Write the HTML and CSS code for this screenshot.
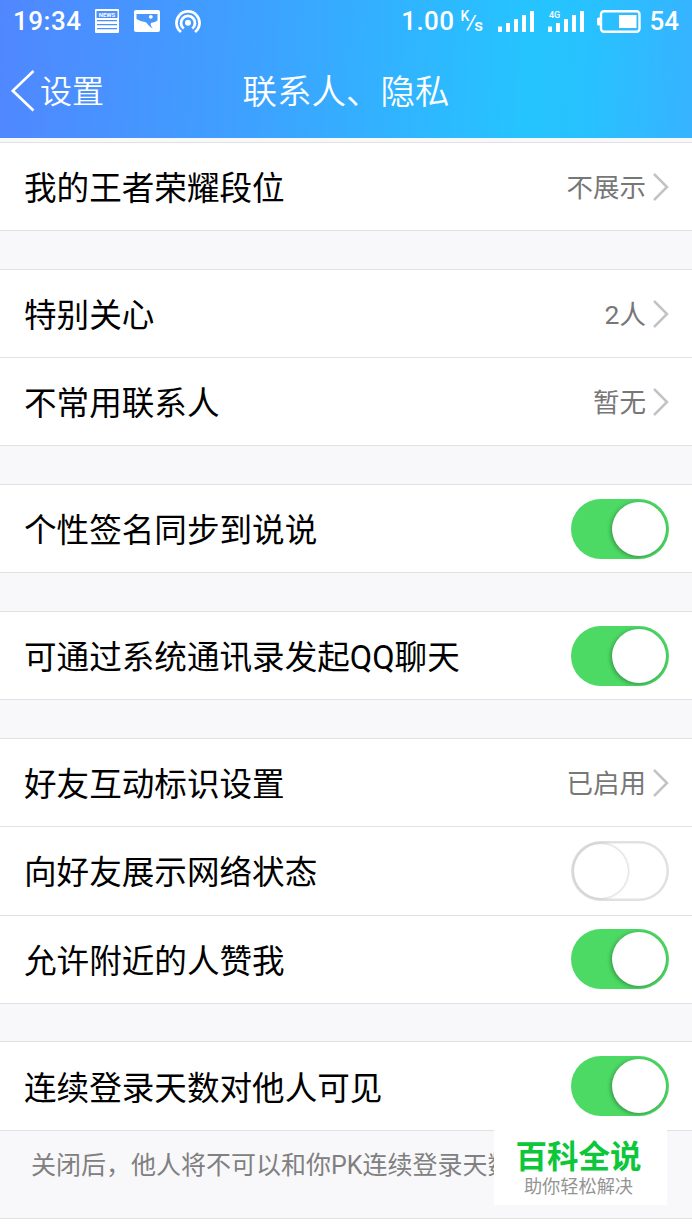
FILE: index.html
```html
<!DOCTYPE html>
<html lang="zh-CN">
<head>
    <meta charset="UTF-8">
    <meta name="viewport" content="width=device-width, initial-scale=1.0">
    <title>联系人、隐私</title>
    <link rel="stylesheet" href="styles.css">
</head>
<body>
    <header class="header">
        <div class="status-bar">
            <span class="time">19:34</span>
            <svg class="icon-news" width="24" height="24" viewBox="0 0 24 24">
                <rect width="24" height="24" rx="1" fill="#fff"/>
                <path d="M1.500 2h21v7h-21zM2 11h20v1.300H2zM2 15h20v1.300H2zM2 19h20v1.300H2z" fill="#4b90fd"/>
                <text x="12" y="7.800" text-anchor="middle" class="news-text">NEWS</text>
            </svg>
            <svg class="icon-picture" width="26" height="22" viewBox="0 0 26 22">
                <rect width="26" height="22" rx="2" fill="#fff"/>
                <path d="M2.500 4h21v6.500c-2.500 1.500-4.500 2-6.500 2.500-.8 1.200-.2 3 1.800 5.500-3-1.500-5-4-6.500-6-3-1-6.500-1.500-9.800-3.500z" fill="#4797fe"/>
                <circle cx="16.800" cy="6.800" r="1.900" fill="#fff"/>
            </svg>
            <svg class="icon-cast" width="26" height="26" viewBox="0 0 26 26" fill="none" stroke="#fff" stroke-width="2.800">
                <path d="M6 23a11.500 11.500 0 1 1 14 0"/>
                <path d="M8.800 19.500a7 7 0 1 1 8.400 0"/>
                <circle cx="13" cy="13.800" r="3" fill="#fff" stroke="none"/>
            </svg>
            <div class="status-right">
                <span class="speed">1.00</span>
                <span class="unit"><sup>K</sup><i>/</i><sub>s</sub></span>
                <svg class="signal" width="36" height="24" viewBox="0 0 36 24" fill="#fff">
                    <path d="M0 17.500h4V23H0zM8 14h4v9H8zM16 10h4v13h-4zM24 6h4v17h-4zM32 2h4v21h-4z"/>
                </svg>
                <svg class="signal signal-4g" width="36" height="24" viewBox="0 0 36 24" fill="#fff">
                    <text x="1" y="9" class="net-text">4G</text>
                    <path d="M0 17.500h4V23H0zM8 14h4v9H8zM16 10h4v13h-4zM24 6h4v17h-4zM32 2h4v21h-4z"/>
                </svg>
                <svg class="battery" width="44" height="23" viewBox="0 0 44 23">
                    <rect x="4" y="1.200" width="38.500" height="20.600" rx="3" fill="none" stroke="#fff" stroke-width="2.400"/>
                    <path d="M3 7.500H1.500Q0 7.500 0 9v5q0 1.500 1.500 1.500H3zM22 5h17.500v13H22z" fill="#fff"/>
                </svg>
                <span class="percent">54</span>
            </div>
        </div>
        <nav class="nav">
            <a class="back">
                <svg width="24" height="42" viewBox="0 0 24 42" fill="none" stroke="#fff" stroke-width="2.600">
                    <path d="M22.500 1L1.800 20.800 22.500 40.500"/>
                </svg>
                <span>设置</span>
            </a>
            <h1>联系人、隐私</h1>
        </nav>
    </header>

    <main class="settings">
        <section class="group">
            <div class="row">
                <span class="label">我的王者荣耀段位</span>
                <span class="value">不展示</span>
                <svg class="arrow" viewBox="0 0 16 28"><path d="M1 1l13 13L1 27"/></svg>
            </div>
        </section>

        <section class="group">
            <div class="row">
                <span class="label">特别关心</span>
                <span class="value">2人</span>
                <svg class="arrow" viewBox="0 0 16 28"><path d="M1 1l13 13L1 27"/></svg>
            </div>
            <div class="row">
                <span class="label">不常用联系人</span>
                <span class="value">暂无</span>
                <svg class="arrow" viewBox="0 0 16 28"><path d="M1 1l13 13L1 27"/></svg>
            </div>
        </section>

        <section class="group">
            <div class="row">
                <span class="label">个性签名同步到说说</span>
                <span class="switch on"></span>
            </div>
        </section>

        <section class="group">
            <div class="row">
                <span class="label">可通过系统通讯录发起QQ聊天</span>
                <span class="switch on"></span>
            </div>
        </section>

        <section class="group">
            <div class="row">
                <span class="label">好友互动标识设置</span>
                <span class="value">已启用</span>
                <svg class="arrow" viewBox="0 0 16 28"><path d="M1 1l13 13L1 27"/></svg>
            </div>
            <div class="row">
                <span class="label">向好友展示网络状态</span>
                <span class="switch"></span>
            </div>
            <div class="row">
                <span class="label">允许附近的人赞我</span>
                <span class="switch on"></span>
            </div>
        </section>

        <section class="group">
            <div class="row">
                <span class="label">连续登录天数对他人可见</span>
                <span class="switch on"></span>
            </div>
        </section>

        <p class="hint">关闭后，他人将不可以和你PK连续登录天数</p>
    </main>

    <div class="watermark">
        <strong>百科全说</strong>
        <span>助你轻松解决</span>
    </div>
</body>
</html>
```

FILE: styles.css
```css
* {
    box-sizing: border-box;
}
body {
    position: relative;
    margin: 0;
    height: 1230px;
    overflow: hidden;
    background: #fff;
    color: #000;
    font-family: Roboto, "Noto Sans CJK SC", sans-serif;
}

/* header */
.header {
    height: 138px;
    color: #fff;
    background: linear-gradient(93deg, #5087ff 0%, #3f9fff 34%, #25c4ff 76%, #27c2ff 84%, #37b3ff 100%);
}
.status-bar {
    display: flex;
    align-items: center;
    height: 43px;
    padding: 0 13px;
    font-size: 26px;
    font-weight: 500;
    line-height: 43px;
}
.time {
    width: 82px;
    letter-spacing: 0.5px;
}
.icon-news {
    margin-top: -1px;
}
.icon-picture {
    margin-left: 15px;
    margin-top: -1px;
}
.icon-cast {
    margin-left: 15px;
}
.news-text {
    font-size: 6px;
    font-weight: 700;
    fill: #fff;
}
.net-text {
    font-size: 9px;
    font-weight: 500;
}
.status-right {
    display: flex;
    align-items: center;
    margin-left: auto;
}
.speed {
    letter-spacing: 0.4px;
}
.unit {
    display: flex;
    margin: 0 13px 0 6px;
    width: 25px;
    height: 23px;
    line-height: 1;
}
.unit sup,
.unit sub {
    font-size: 14px;
    line-height: 12px;
    vertical-align: baseline;
}
.unit sub {
    align-self: flex-end;
    font-size: 17px;
    line-height: 15px;
}
.unit i {
    font-size: 20px;
    line-height: 24px;
    font-weight: 400;
    margin: 0 -1px 0 -2px;
}
.signal {
    margin-top: -2px;
}
.signal-4g {
    margin-left: 14px;
}
.battery {
    margin: 0 8px 0 13px;
}
.nav {
    display: grid;
    grid-template-columns: 1fr auto 1fr;
    align-items: center;
    height: 95px;
}
.back {
    display: flex;
    align-items: center;
    gap: 5px;
    padding-left: 11px;
    font-size: 32px;
    font-weight: 350;
}
.back span {
    padding-bottom: 4px;
}
.nav h1 {
    margin: 0;
    padding-bottom: 4px;
    font-size: 34.5px;
    font-weight: 350;
}

/* settings list */
.settings {
    height: 1081px;
    padding-top: 4px;
    background: #f8f8fb;
    border-bottom: 1px solid #e2e2e4;
}
.group {
    border-top: 1px solid #e2e2e4;
    margin-bottom: 37.8px;
    background: #fff;
}
.row {
    display: flex;
    align-items: center;
    height: 88.2px;
    padding: 0 23px 0 24px;
    border-bottom: 1px solid #e2e2e4;
}
.label {
    flex: 1;
    padding-bottom: 2px;
    font-size: 32.6px;
    white-space: nowrap;
}
.value {
    padding-bottom: 2px;
    color: #777;
    font-size: 26.5px;
}
.arrow {
    width: 16px;
    height: 28px;
    margin-left: 7px;
    fill: none;
    stroke: #c3c3c5;
    stroke-width: 2.5;
}
.switch {
    width: 98px;
    height: 60px;
    padding: 3px;
    border-radius: 30px;
    box-shadow: inset 0 0 0 2.5px #e1e1e1;
}
.switch::before {
    content: "";
    display: block;
    width: 54px;
    height: 54px;
    border-radius: 50%;
    background: #fff;
    box-shadow: 0 0 3px rgba(0, 0, 0, 0.3);
}
.switch.on {
    background: #4cd964;
    box-shadow: none;
}
.switch.on::before {
    margin-left: 38px;
    box-shadow: -1px 1px 4px rgba(0, 0, 0, 0.35);
}
.group:nth-last-of-type(1) {
    margin-bottom: 0;
}
.hint {
    margin: 0;
    padding-left: 31px;
    color: #808080;
    font-size: 25px;
    line-height: 69px;
    white-space: nowrap;
}

.watermark {
    position: absolute;
    left: 494px;
    top: 1130px;
    display: flex;
    flex-direction: column;
    align-items: center;
    width: 173px;
    height: 75px;
    padding: 11px 4px 0 0;
    background: #fff;
}
.watermark strong {
    color: #0bc739;
    font-size: 31.5px;
    line-height: 34px;
    font-weight: 700;
}
.watermark span {
    color: #949494;
    font-size: 18.2px;
    line-height: 24px;
}
```
